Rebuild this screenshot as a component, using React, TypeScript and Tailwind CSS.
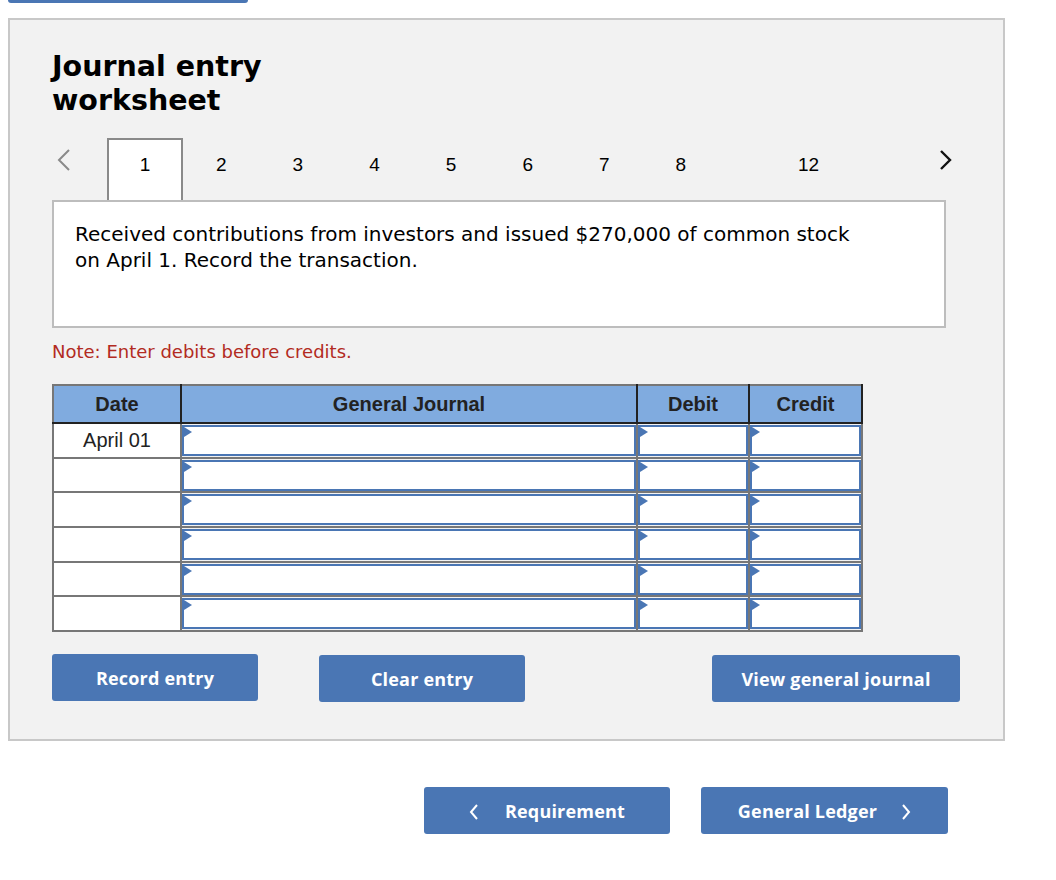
import React from "react";

const verdana = { fontFamily: '"DejaVu Sans", Verdana, sans-serif' };
const arial = { fontFamily: '"Liberation Sans", Arial, sans-serif' };
const btnFont = { fontFamily: '"Open Sans", Inter, sans-serif', letterSpacing: "0.2px" };

function Flag() {
  return (
    <span className="absolute left-0 top-0 w-0 h-0 border-y-[5px] border-y-transparent border-l-[8px] border-l-[#4a76b4]" />
  );
}

function InputCell({ w }: { w: string }) {
  return (
    <td className={`p-0 border-2 border-[#777] ${w}`}>
      <div className="relative h-[31px] border-2 border-[#4a76b4] bg-white">
        <Flag />
      </div>
    </td>
  );
}

export default function App() {
  const rows = ["April 01", "", "", "", "", ""];
  const tabs = ["2", "3", "4", "5", "6", "7", "8"];
  return (
    <div className="w-[1056px] h-[880px] bg-white relative overflow-hidden">
      <div className="ml-[8px] w-[240px] h-[3px] bg-[#4a76b4] rounded-b-[3px]" />
      <div className="ml-[8px] mt-[15px] w-[997px] h-[723px] bg-[#f2f2f2] border-2 border-[#c8c8c8] pl-[42px] pt-[30px]">
        <h1 className="text-[28.5px] leading-[34px] font-bold text-black" style={verdana}>
          Journal entry
          <br />
          worksheet
        </h1>
        {/* tabs */}
        <div className="mt-[20px] flex items-end h-[62px]" style={arial}>
          <div className="w-[55px] h-full flex items-start pt-[10px] pl-[4px]">
            <svg width="16" height="24" viewBox="0 0 16 24" fill="none">
              <path d="M13 2 L3 12 L13 22" stroke="#8a8a8a" strokeWidth="2" />
            </svg>
          </div>
          <div className="w-[76px] h-[62px] bg-white border-2 border-b-0 border-[#8a8a8a] flex justify-center pt-[11px] text-[19px] text-black relative z-10">
            1
          </div>
          {tabs.map((t) => (
            <div key={t} className="w-[76.6px] h-[62px] flex justify-center pt-[13px] text-[19px] text-black">
              {t}
            </div>
          ))}
          <div className="w-[51px]" />
          <div className="w-[76.6px] h-[62px] flex justify-center pt-[13px] text-[19px] text-black">12</div>
          <div className="w-[107px] h-full flex justify-end pt-[11px]">
            <svg width="16" height="22" viewBox="0 0 16 22" fill="none">
              <path d="M3 2 L12 11 L3 20" stroke="#111" strokeWidth="2.4" />
            </svg>
          </div>
        </div>
        {/* question */}
        <div className="w-[894px] h-[128px] bg-white border-2 border-[#bdbdbd] pl-[21px] pt-[19px] text-[20px] leading-[26px] text-black" style={verdana}>
          Received contributions from investors and issued $270,000 of common stock
          <br />
          on April 1. Record the transaction.
        </div>
        <div className="mt-[13px] text-[18px] leading-[22px] text-[#b22b22]" style={verdana}>
          Note: Enter debits before credits.
        </div>
        {/* table */}
        <table className="mt-[21px] border-collapse" style={arial}>
          <thead>
            <tr className="h-[38px] bg-[#80abdf] text-[20px] font-bold text-[#222]">
              <th className="w-[128px] border-2 border-[#222] border-t-[#777] border-l-[#777] font-bold">Date</th>
              <th className="w-[456px] border-2 border-[#222] border-t-[#777] font-bold">General Journal</th>
              <th className="w-[112px] border-2 border-[#222] border-t-[#777] font-bold">Debit</th>
              <th className="w-[113px] border-2 border-[#222] border-t-[#777] font-bold">Credit</th>
            </tr>
          </thead>
          <tbody>
            {rows.map((r, i) => (
              <tr key={i} className="h-[34.7px]">
                <td className="w-[128px] border-2 border-[#777] bg-white text-center text-[20px] text-[#222] p-0">{r}</td>
                <InputCell w="w-[456px]" />
                <InputCell w="w-[112px]" />
                <InputCell w="w-[113px]" />
              </tr>
            ))}
          </tbody>
        </table>
        {/* action buttons */}
        <div className="mt-[22px] flex items-start text-white font-bold text-[18px]" style={btnFont}>
          <button className="w-[206px] h-[47px] pt-[2px] bg-[#4a76b4] rounded-[3px]">Record entry</button>
          <button className="ml-[61px] mt-[1px] w-[206px] h-[47px] pt-[2px] bg-[#4a76b4] rounded-[3px]">Clear entry</button>
          <button className="ml-[187px] mt-[1px] w-[248px] h-[47px] pt-[2px] bg-[#4a76b4] rounded-[3px]">View general journal</button>
        </div>
      </div>
      {/* bottom nav */}
      <div className="mt-[46px] ml-[424px] flex gap-[31px] text-white font-bold text-[18px]" style={btnFont}>
        <button className="w-[246px] h-[47px] pt-[2px] bg-[#4a76b4] rounded-[3px] flex items-center justify-center gap-[26px]">
          <svg width="10" height="16" viewBox="0 0 10 16" fill="none">
            <path d="M8 1 L2 8 L8 15" stroke="white" strokeWidth="2" />
          </svg>
          <span>Requirement</span>
        </button>
        <button className="w-[247px] h-[47px] pt-[2px] bg-[#4a76b4] rounded-[3px] flex items-center justify-center gap-[24px]">
          <span>General Ledger</span>
          <svg width="10" height="16" viewBox="0 0 10 16" fill="none">
            <path d="M2 1 L8 8 L2 15" stroke="white" strokeWidth="2" />
          </svg>
        </button>
      </div>
    </div>
  );
}
